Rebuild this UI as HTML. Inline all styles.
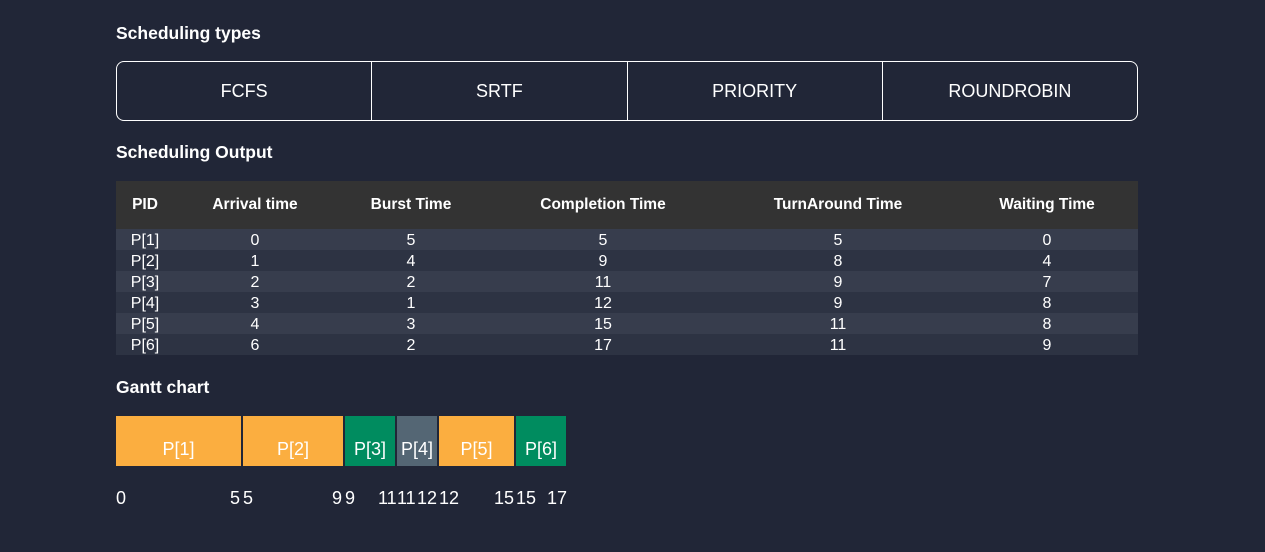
<!DOCTYPE html>
<html><head><style>
body{margin:0;background:#212637;font-family:"Liberation Sans",sans-serif;color:#fff;width:1265px;height:552px;position:relative;overflow:hidden}
h3{position:absolute;left:116px;margin:0;font-size:17.5px;font-weight:bold}
.btns{position:absolute;left:116px;top:61px;width:1022px;height:60px;border:1px solid #fff;border-radius:8px;display:flex;box-sizing:border-box}
.btns div{flex:1;display:flex;align-items:center;justify-content:center;font-size:18px;border-right:1px solid #fff}
.btns div:last-child{border-right:none}
table{position:absolute;left:116px;top:181px;width:1022px;border-collapse:collapse;font-size:16px}
th{background:#333333;height:48px;font-size:15.5px;font-weight:bold;padding:0}
td{text-align:center;height:19px;padding:2px 0 0;line-height:19px}
tr:nth-child(odd) td{background:#2d3343}
tr:nth-child(even) td{background:#373d4d}
.g{position:absolute;top:416px;height:50px;display:flex;align-items:flex-end;justify-content:center;padding-bottom:6px;box-sizing:border-box;font-size:18px}
.n{position:absolute;top:488px;font-size:18px}
</style></head><body>
<h3 style="top:23px">Scheduling types</h3>
<div class="btns"><div>FCFS</div><div>SRTF</div><div>PRIORITY</div><div>ROUNDROBIN</div></div>
<h3 style="top:142px">Scheduling Output</h3>
<table>
<tr><th style="width:58px">PID</th><th style="width:162px">Arrival time</th><th style="width:150px">Burst Time</th><th style="width:234px">Completion Time</th><th style="width:236px">TurnAround Time</th><th>Waiting Time</th></tr>
<tr><td>P[1]</td><td>0</td><td>5</td><td>5</td><td>5</td><td>0</td></tr>
<tr><td>P[2]</td><td>1</td><td>4</td><td>9</td><td>8</td><td>4</td></tr>
<tr><td>P[3]</td><td>2</td><td>2</td><td>11</td><td>9</td><td>7</td></tr>
<tr><td>P[4]</td><td>3</td><td>1</td><td>12</td><td>9</td><td>8</td></tr>
<tr><td>P[5]</td><td>4</td><td>3</td><td>15</td><td>11</td><td>8</td></tr>
<tr><td>P[6]</td><td>6</td><td>2</td><td>17</td><td>11</td><td>9</td></tr>
</table>
<h3 style="top:377px">Gantt chart</h3>
<div class="g" style="left:116px;width:125px;background:#fbae40">P[1]</div>
<div class="g" style="left:243px;width:100px;background:#fbae40">P[2]</div>
<div class="g" style="left:345px;width:50px;background:#008c5f">P[3]</div>
<div class="g" style="left:397px;width:40px;background:#546674">P[4]</div>
<div class="g" style="left:439px;width:75px;background:#fbae40">P[5]</div>
<div class="g" style="left:516px;width:50px;background:#008c5f">P[6]</div>
<span class="n" style="left:116px">0</span><span class="n" style="left:230px">5</span>
<span class="n" style="left:243px">5</span><span class="n" style="left:332px">9</span>
<span class="n" style="left:345px">9</span><span class="n" style="left:378px">11</span>
<span class="n" style="left:397px">11</span><span class="n" style="left:417px">12</span>
<span class="n" style="left:439px">12</span><span class="n" style="left:494px">15</span>
<span class="n" style="left:516px">15</span><span class="n" style="left:547px">17</span>
</body></html>
